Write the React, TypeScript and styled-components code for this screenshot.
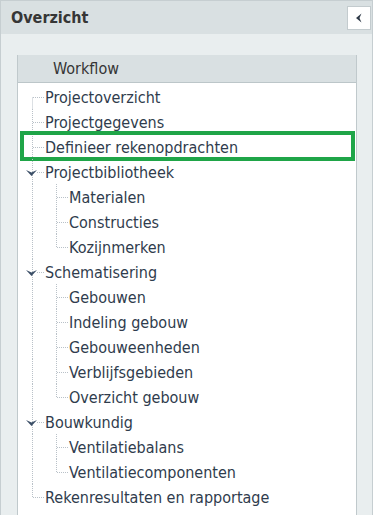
import React from 'react'
import styled, { createGlobalStyle, css } from 'styled-components'

const GlobalStyle = createGlobalStyle`
  html, body {
    margin: 0;
    padding: 0;
    background: #ffffff;
  }
  body {
    font-family: "DejaVu Sans Condensed", "DejaVu Sans", Tahoma, sans-serif;
  }
`

const Frame = styled.div`
  width: 373px;
  height: 515px;
  box-sizing: border-box;
  border: 1px solid #c6ced1;
  border-bottom: none;
  background: #e9eeef;
  display: flex;
  flex-direction: column;
  overflow: hidden;
`

const Header = styled.div`
  height: 33px;
  flex-shrink: 0;
  background: #d9e0e2;
  display: flex;
  align-items: center;
  justify-content: space-between;
  padding: 0 1px 0 10px;
`

const Title = styled.h2`
  margin: 0;
  font-size: 16px;
  font-weight: bold;
  color: #363636;
`

const CollapseButton = styled.button`
  width: 24px;
  height: 24px;
  padding: 0;
  background: #ffffff;
  border: 1px solid #c3cbce;
  display: flex;
  align-items: center;
  justify-content: center;
  cursor: pointer;
`

const Body = styled.div`
  flex: 1;
  display: flex;
  padding: 21px 15px 0 16px;
  min-height: 0;
`

const Panel = styled.div`
  flex: 1;
  display: flex;
  flex-direction: column;
  background: #ffffff;
  border-left: 1px solid #c0c9cc;
  border-right: 1px solid #c0c9cc;
`

const PanelHeader = styled.div`
  height: 27px;
  flex-shrink: 0;
  display: flex;
  align-items: center;
  padding-left: 35px;
  background: #d9e0e2;
  border-bottom: 1px solid #bcc6c9;
  font-size: 16px;
  color: #353535;
`

const Tree = styled.ul`
  list-style: none;
  margin: 0;
  padding: 1px 0 0;
`

const Row = styled.li<{ $active?: boolean }>`
  position: relative;
  height: 25px;
  display: flex;
  align-items: center;
  ${(p) =>
    p.$active &&
    css`
      &::after {
        content: '';
        position: absolute;
        top: -3px;
        bottom: -2px;
        left: 2px;
        right: 1px;
        border: 4px solid #1fa548;
        pointer-events: none;
      }
    `}
`

const Guides = styled.svg`
  flex-shrink: 0;
  height: 25px;
  display: block;
`

const Label = styled.span`
  font-size: 16px;
  color: #2f3c4d;
  white-space: nowrap;
  padding-top: 2px;
`

type Node = {
  label: string
  active?: boolean
  children?: string[]
}

const workflow: Node[] = [
  { label: 'Projectoverzicht' },
  { label: 'Projectgegevens' },
  { label: 'Definieer rekenopdrachten', active: true },
  { label: 'Projectbibliotheek', children: ['Materialen', 'Constructies', 'Kozijnmerken'] },
  {
    label: 'Schematisering',
    children: ['Gebouwen', 'Indeling gebouw', 'Gebouweenheden', 'Verblijfsgebieden', 'Overzicht gebouw'],
  },
  { label: 'Bouwkundig', children: ['Ventilatiebalans', 'Ventilatiecomponenten'] },
  { label: 'Rekenresultaten en rapportage' },
]

const DOT = '#b9c1c8'
const MID = 13.5

function TopGuide({ first, last, expanded }: { first: boolean; last: boolean; expanded: boolean }) {
  return (
    <Guides width={27} viewBox="0 0 27 25">
      <line x1={14.5} y1={first ? MID : 0} x2={14.5} y2={last ? MID : 25} stroke={DOT} strokeDasharray="1 1" />
      <line x1={expanded ? 19 : 15} y1={MID} x2={26} y2={MID} stroke={DOT} strokeDasharray="1 1" />
      {expanded && <path d="M8 11 L13.5 17 L19 11 L13.5 13.5 Z" fill="#3a4d66" />}
    </Guides>
  )
}

function ChildGuide({ last }: { last: boolean }) {
  return (
    <Guides width={51} viewBox="0 0 51 25">
      <line x1={14.5} y1={0} x2={14.5} y2={25} stroke={DOT} strokeDasharray="1 1" />
      <line x1={38.5} y1={0} x2={38.5} y2={last ? MID : 25} stroke={DOT} strokeDasharray="1 1" />
      <line x1={39} y1={MID} x2={50} y2={MID} stroke={DOT} strokeDasharray="1 1" />
    </Guides>
  )
}

export default function App() {
  return (
    <>
      <GlobalStyle />
      <Frame>
        <Header>
          <Title>Overzicht</Title>
          <CollapseButton aria-label="Inklappen">
            <svg width="8" height="10" viewBox="0 0 8 10">
              <path d="M6.5 0.5 L1 5 L6.5 9.5 L4.5 5 Z" fill="#2f3a48" />
            </svg>
          </CollapseButton>
        </Header>
        <Body>
          <Panel>
            <PanelHeader>Workflow</PanelHeader>
            <Tree>
              {workflow.map((node, i) => (
                <React.Fragment key={node.label}>
                  <Row $active={node.active}>
                    <TopGuide first={i === 0} last={i === workflow.length - 1} expanded={!!node.children} />
                    <Label>{node.label}</Label>
                  </Row>
                  {node.children?.map((child, j) => (
                    <Row key={child}>
                      <ChildGuide last={j === node.children!.length - 1} />
                      <Label>{child}</Label>
                    </Row>
                  ))}
                </React.Fragment>
              ))}
            </Tree>
          </Panel>
        </Body>
      </Frame>
    </>
  )
}
